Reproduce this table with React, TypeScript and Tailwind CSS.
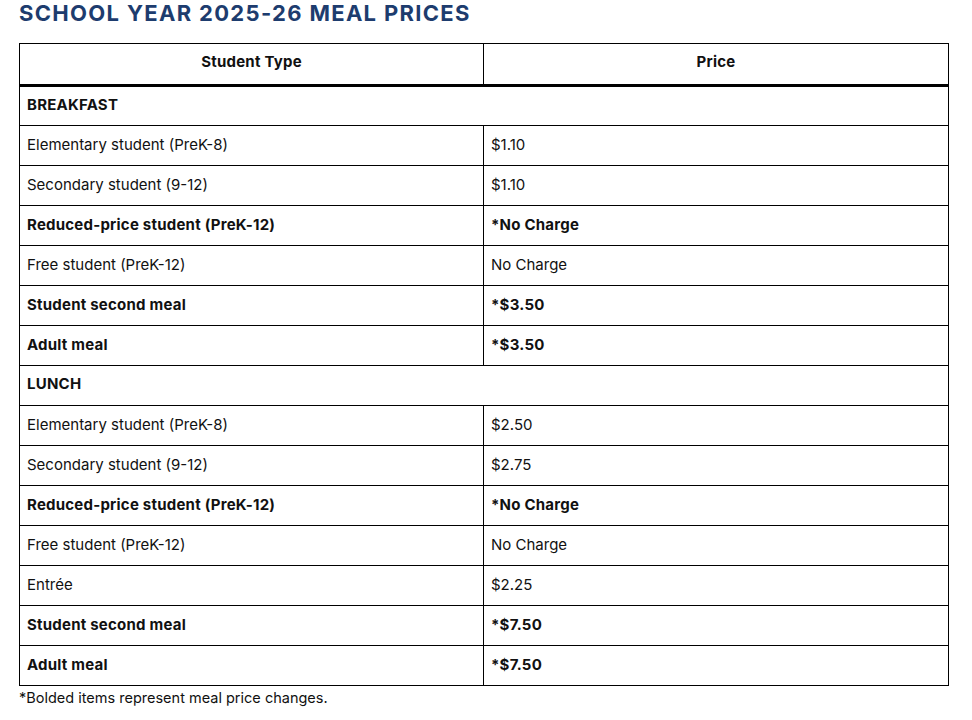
const font = { fontFamily: 'Inter, "Noto Sans", sans-serif' };

type Row = { label: string; price: string; bold?: boolean };

const sections: { title: string; rows: Row[] }[] = [
  {
    title: 'BREAKFAST',
    rows: [
      { label: 'Elementary student (PreK-8)', price: '$1.10' },
      { label: 'Secondary student (9-12)', price: '$1.10' },
      { label: 'Reduced-price student (PreK-12)', price: '*No Charge', bold: true },
      { label: 'Free student (PreK-12)', price: 'No Charge' },
      { label: 'Student second meal', price: '*$3.50', bold: true },
      { label: 'Adult meal', price: '*$3.50', bold: true },
    ],
  },
  {
    title: 'LUNCH',
    rows: [
      { label: 'Elementary student (PreK-8)', price: '$2.50' },
      { label: 'Secondary student (9-12)', price: '$2.75' },
      { label: 'Reduced-price student (PreK-12)', price: '*No Charge', bold: true },
      { label: 'Free student (PreK-12)', price: 'No Charge' },
      { label: 'Entrée', price: '$2.25' },
      { label: 'Student second meal', price: '*$7.50', bold: true },
      { label: 'Adult meal', price: '*$7.50', bold: true },
    ],
  },
];

export default function App() {
  return (
    <div className="min-h-screen bg-white px-[19px] text-[#111]" style={font}>
      <h2 className="pt-px text-[22px] font-bold leading-[24px] tracking-[0.06em] text-[#1d3c6e]">
        SCHOOL YEAR 2025-26 MEAL PRICES
      </h2>
      <table className="mt-[18px] w-[930px] table-fixed border-collapse text-[15px]">
        <thead>
          <tr className="h-[42px] border-b-[3px] border-black">
            <th className="w-[464px] border border-black pb-[3px] font-bold tracking-[0.015em]">Student Type</th>
            <th className="border border-black pb-[3px] font-bold tracking-[0.015em]">Price</th>
          </tr>
        </thead>
        <tbody>
          {sections.map((s) => (
            <>
              <tr key={s.title} className="h-[40px]">
                <td colSpan={2} className="border border-black px-[7px] pb-[2px] font-bold tracking-[0.015em]">
                  {s.title}
                </td>
              </tr>
              {s.rows.map((r, i) => (
                <tr key={s.title + i} className="h-[40px]">
                  <td className={`border border-black px-[7px] pb-px ${r.bold ? 'font-bold tracking-[0.015em]' : ''}`}>{r.label}</td>
                  <td className={`border border-black px-[7px] pb-px ${r.bold ? 'font-bold tracking-[0.015em]' : ''}`}>{r.price}</td>
                </tr>
              ))}
            </>
          ))}
        </tbody>
      </table>
      <p className="mt-[2px] text-[14.5px] leading-[20px]">*Bolded items represent meal price changes.</p>
    </div>
  );
}
